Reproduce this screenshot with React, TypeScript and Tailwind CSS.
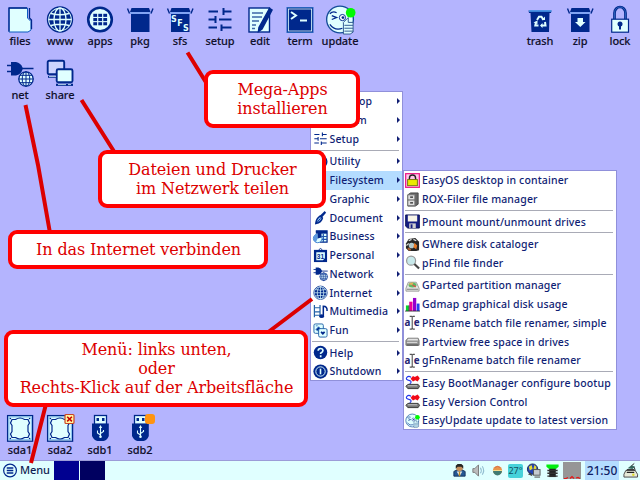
import React from "react";

const N = "#00288c";
const L = "#e0ffff";

type IconProps = { s?: number };

function Svg({ s = 28, box = 28, children }: { s?: number; box?: number; children: React.ReactNode }) {
  return (
    <svg width={s} height={s} viewBox={`0 0 ${box} ${box}`} fill="none" className="block shrink-0 overflow-visible">
      {children}
    </svg>
  );
}

const Files = ({ s }: IconProps) => (
  <Svg s={s}>
    <path d="M3 3H21.500V13L25 16.500V25L22 27H3Z" fill={L} stroke="#0d5ac0" strokeWidth="1" />
    <path d="M3 26.500V3H21M23.500 3V13L25.500 15V24" stroke={N} strokeWidth="1.300" />
  </Svg>
);

const Globe = ({ s }: IconProps) => (
  <Svg s={s}>
    <circle cx="14" cy="14.500" r="12.500" fill={L} stroke={N} strokeWidth="1.400" />
    <circle cx="14" cy="14.500" r="10.800" fill={N} />
    <g stroke={L} strokeWidth="1.300">
      <path d="M14 3V26M2.500 14.500H25.500M5 8.500Q14 11 23 8.500M5 20.500Q14 18 23 20.500" />
      <ellipse cx="14" cy="14.500" rx="6" ry="11.500" />
    </g>
  </Svg>
);

const Apps = ({ s }: IconProps) => (
  <Svg s={s}>
    <circle cx="14" cy="14.500" r="11.800" fill={L} stroke={N} strokeWidth="2.600" />
    {[0, 1, 2].map((r) => [0, 1, 2].map((c) => (
      <rect key={`${r}${c}`} x={7.3 + c * 5} y={8.8 + r * 4.2} width="3.800" height="3.100" fill={N} />
    )))}
  </Svg>
);

const Box = ({ s, children }: IconProps & { children?: React.ReactNode }) => (
  <Svg s={s}>
    <path d="M5 9H23.500V27H5Z" fill={N} />
    <path d="M5.500 3H23L24.500 7H4Z" fill={N} />
    <path d="M4 8H24.500" stroke="#4e93e8" strokeWidth="1" />
    <path d="M1.500 3.500L3.500 8.500M27 3.500L25 8.500" stroke={N} strokeWidth="1.400" />
    {children}
  </Svg>
);

const Sfs = () => (
  <Box>
    <g fill={L} fontFamily="DejaVu Sans" fontWeight="bold" fontSize="8">
      <text x="5" y="16.500">S</text>
      <text x="11.200" y="21">F</text>
      <text x="17" y="26">S</text>
    </g>
  </Box>
);

const Setup = ({ s }: IconProps) => (
  <Svg s={s}>
    <path d="M2.500 6.500H12M17.500 6.500H25.500M2.500 14.500H9.500M13 14.500H25.500M2.500 22.500H11M15.500 22.500H25.500M17.500 3V10M9.500 11V18M15.500 19.500V26" stroke={N} strokeWidth="2" />
  </Svg>
);

const Edit = () => (
  <Svg>
    <rect x="3" y="3" width="20.500" height="24" fill={L} stroke={N} strokeWidth="1.400" />
    <path d="M6 8H17M6 12H16M6 16H13M6 20H10M6 23.500H9" stroke="#3d68a8" strokeWidth="1.300" />
    <path d="M23.500 3.500L26 5L16 24L12.500 26.500L13 22.500Z" fill={N} stroke={N} strokeWidth="1.500" />
  </Svg>
);

const Term = () => (
  <Svg>
    <rect x="1" y="2.500" width="26" height="25" fill={N} stroke="#2463bc" strokeWidth="1" />
    <rect x="2.400" y="4" width="23.200" height="22" stroke={L} strokeWidth=".8" />
    <path d="M5 7L10 10.500L5 14M14 15.500H21" stroke={L} strokeWidth="2" />
  </Svg>
);

const Update = ({ s = 31 }: IconProps) => (
  <Svg s={s} box={32}>
    <circle cx="15.500" cy="16" r="13.800" fill={L} stroke="#154d99" strokeWidth="1.400" />
    <path d="M5 10Q8 7 12 9M7 12L12 14L7 16" stroke={N} strokeWidth="1.300" />
    <circle cx="18" cy="14" r="3.200" fill="white" stroke={N} />
    <circle cx="18.500" cy="14" r="1.400" fill={N} />
    <path d="M5 21Q10 28 18 25" stroke={N} strokeWidth="1.300" />
    <path d="M19 19L24 14V19H29V29L26 31H19Z" fill={L} stroke="#315a91" />
    <path d="M20 22H29M20 25H29M20 28H29" stroke="#315a91" />
    <circle cx="26.500" cy="9" r="5" fill="#00fb00" />
  </Svg>
);

const Trash = () => (
  <Svg>
    <path d="M2.500 5.500H25.500L25 8H23.500L23 27H5.500L4.500 8H3Z" fill={N} />
    <path d="M3 6H25.500" stroke="#4c9deb" strokeWidth="1.600" />
    <g stroke={L} strokeWidth="2">
      <path d="M11 15L13 11.800H15.500L17.500 15M19 17L19.500 20.500H15.500M12.500 20.500H9.300L10 17" />
    </g>
    <path d="M15.500 15H19V11.500ZM16.500 18V23L14 20.500ZM7.500 17.500L11.500 15.500V19Z" fill={L} />
  </Svg>
);

const Zip = () => (
  <Box><path d="M11.500 13H17V17H19.500L14.300 22L9 17H11.500Z" fill={L} /></Box>
);

const Lock = () => (
  <Svg>
    <path d="M8.500 15V8A5.500 6 0 0 1 19.500 8V15" stroke={N} strokeWidth="2.700" />
    <path d="M8.500 15V8A5.500 6 0 0 1 19.500 8V15" stroke="#3b75cc" strokeWidth=".7" />
    <rect x="5.700" y="14.200" width="16.800" height="13" fill={L} stroke={N} strokeWidth="1.200" />
    <circle cx="14" cy="19" r="2.500" fill={N} />
    <path d="M14 19V24.500" stroke={N} strokeWidth="2" />
  </Svg>
);

const Net = ({ s }: IconProps) => (
  <Svg s={s}>
    <path d="M1 6.500H6M1 12.500H6M14 9.500H27.500" stroke={N} strokeWidth="1.600" />
    <path d="M5 3H10Q15 4 16.500 8.500V10.500Q15 15.500 10 16.500H5Z" fill={N} />
    <circle cx="20" cy="20" r="7.200" fill={L} stroke={N} strokeWidth="1.300" />
    <path d="M20 12.500V27.500M12.500 20H27.500M14 16.300H26M14 23.700H26" stroke={N} />
    <ellipse cx="20" cy="20" rx="3.800" ry="7.200" stroke={N} />
  </Svg>
);

const Share = () => (
  <Svg>
    <rect x="1.700" y="1.700" width="16.500" height="13.500" rx="1.500" fill="#cdd5ff" stroke={N} strokeWidth="1.900" />
    <path d="M2 17.800H11" stroke={N} strokeWidth="2" />
    <rect x="10.700" y="10.200" width="15.800" height="13" rx="1.500" fill={L} stroke={N} strokeWidth="1.900" />
    <path d="M10 25.800H27" stroke={N} strokeWidth="2.200" />
    <path d="M3 17.600H10M12 25.600H20M22 25.600H25" stroke={L} strokeWidth=".8" />
  </Svg>
);

const Drive = ({ mounted }: { mounted?: boolean }) => (
  <Svg>
    <rect x="1.600" y="1.600" width="25" height="25.600" fill={L} stroke={N} strokeWidth="1.300" />
    <rect x="3" y="3" width="22.200" height="22.800" stroke="#4b98e4" strokeWidth=".6" />
    <path d="M6 5.500H9.500Q14 2.500 18.500 5.500H22L23.500 9L22 11.500V17.500L23.500 20L22 23.500H18.500Q14 26.500 9.500 23.500H6L4.500 20L6 17.500V11.500L4.500 9Z" stroke={N} strokeWidth="1.200" />
    <g fill={N}><circle cx="4.400" cy="4.500" r=".8" /><circle cx="23.600" cy="4.500" r=".8" /><circle cx="4.400" cy="24.500" r=".8" /><circle cx="23.600" cy="24.500" r=".8" /></g>
    {mounted && (
      <g>
        <rect x="19" y=".5" width="9" height="9" rx="1" fill="#fff5a0" stroke="#c94425" strokeWidth="1.200" />
        <path d="M21.200 2.700L25.900 7.400M25.900 2.700L21.200 7.400" stroke="#c80000" strokeWidth="1.500" />
      </g>
    )}
  </Svg>
);

const Usb = ({ mounted }: { mounted?: boolean }) => (
  <Svg>
    <rect x="8.500" y="1.500" width="12" height="9" fill={L} stroke={N} strokeWidth="1.300" />
    <rect x="10.500" y="4" width="2.500" height="3" fill={N} />
    <rect x="16" y="4" width="2.500" height="3" fill={N} />
    <path d="M6 9.500H22.800V22Q21 26.500 17.500 27H11.500Q8 26.500 6 22Z" fill={N} />
    <path d="M14.500 13V23M14.500 21L11.500 19V16.500M14.500 19.500L17.500 17.500V16" stroke={L} strokeWidth="1.100" />
    <path d="M14.500 11L16.200 14H12.800Z" fill={L} />
    <circle cx="14.500" cy="22.800" r="1.300" fill={L} />
    {mounted && <rect x="19" y="0" width="10" height="10" rx="3" fill="#ff9410" />}
  </Svg>
);

function Shortcut({ label, children }: { label: string; children: React.ReactNode }) {
  return (
    <div className="flex h-[54px] w-10 shrink-0 flex-col items-center">
      <div className="flex h-7 items-center justify-center">{children}</div>
      <span className="mt-[1px] text-[11px] leading-[14px] font-medium tracking-[-0.100px] whitespace-nowrap text-[#10102c] [-webkit-text-stroke:0.12px]">{label}</span>
    </div>
  );
}

/* Small menu and tray glyphs, drawn on a 16 unit square */
const S = ({ children }: { children: React.ReactNode }) => <Svg s={15} box={16}>{children}</Svg>;

const Pen = () => (
  <S><path d="M12.500 1L14 3L9.500 8L7 6.500Z" fill={N} /><path d="M7.500 6.500L10 8.500Q9 13 3 14.500Q3.500 9 7.500 6.500Z" fill="#8dc0f2" stroke={N} strokeWidth="1.600" /><path d="M4 13.500L8 9" stroke={N} /></S>
);
const Chart = () => (
  <S><path d="M3 2H15V14H7" fill={L} stroke={N} strokeWidth="1.300" /><path d="M3 2H15V5H3Z" fill={N} /><path d="M8 8H15M8 11H15M11 5V14" stroke="#1e55ac" strokeWidth="1.300" /><circle cx="5" cy="10" r="4.600" fill={L} stroke="#397dcc" /><path d="M5 10V5.500A4.500 4.500 0 0 0 3 14Z" fill="#5a97de" /><path d="M5 10V4H9V9Z" fill={N} /></S>
);
const Calendar = () => (
  <S><path d="M6 2L8 .500L10 2" stroke={N} /><rect x="1" y="2" width="14" height="13" fill={N} /><path d="M3.500 4.500H12.700V11L10.500 13H3.500Z" fill={L} /><text x="4" y="11.300" fontSize="7" fontWeight="bold" fontFamily="Liberation Sans" fill={N}>31</text></S>
);
const Media = () => (
  <S><path d="M1.500 1V14M7.500 1V14M1.500 4H7.500M1.500 8.500H7.500M1.500 12H7.500" stroke="#2463a8" strokeWidth="1.300" /><path d="M11 13V2.500Q15.500 2.500 15 7.500" stroke={N} strokeWidth="1.600" /><ellipse cx="9.300" cy="13" rx="2.500" ry="2" fill={N} /></S>
);
const Fun = () => (
  <S><rect x="1" y="1" width="10" height="10" rx="1.500" fill={L} stroke="#2463a8" /><path d="M3 3H5M6 4L9 7L6 9L3 7Z" fill={N} stroke="#4b88ca" /><rect x="6" y="6" width="9" height="9" rx="1.500" fill={L} stroke="#2463a8" /><path d="M8 10L10.500 12.700L13 10L11.800 8.800L10.500 9.800L9.200 8.800Z" fill={N} /></S>
);
const Help = () => (
  <S><circle cx="8" cy="8" r="7.200" fill={N} /><path d="M5.500 6.200Q5.500 3.700 8 3.700Q10.600 3.700 10.600 5.900Q10.600 7.300 8.200 8.700V9.700M8.200 11V13" stroke={L} strokeWidth="1.800" /></S>
);
const Shutdown = () => (
  <S><circle cx="8" cy="8" r="7.600" fill={N} /><circle cx="8" cy="8" r="5" stroke={L} strokeWidth="1" /><path d="M8 5V11" stroke={L} strokeWidth="1.700" /></S>
);
const Padlock = () => (
  <S><rect x=".700" y=".700" width="14.600" height="14.600" fill="#ffc8e9" stroke="#ed1787" strokeWidth="1.300" /><path d="M4.700 8V5.500A3.300 3.300 0 0 1 11.300 5.500V8" stroke="#222" strokeWidth="1.500" /><rect x="2.800" y="7" width="10.400" height="6.500" fill="#ece800" stroke="#77720a" /></S>
);
const Cabinet = () => (
  <S><path d="M3 3L6 1H14V13L11 15H3Z" fill="#666" stroke="#444" /><path d="M3 3H10.500V14.500H3Z" fill="#dedede" stroke="#777" /><path d="M3 8.500H10.500" stroke="#555" /><path d="M5.500 5.500H8.500M5.500 11.500H8.500" stroke="#222" strokeWidth="1.300" /></S>
);
const Floppy = () => (
  <S><path d="M.700 1H15.300V15H3L.700 13Z" fill="#161e83" stroke="#0a1155" /><rect x="3" y="1.500" width="10" height="6.500" fill="#f8f5e8" /><rect x="4.500" y="10" width="7" height="5" fill="#d0d0d0" /><rect x="6" y="11" width="2" height="4" fill="#161e83" /></S>
);
const Cataloger = () => (
  <S><path d="M1 7L4 2L11 1L15 5V14L12 15H4L1 12Z" fill="#262626" /><path d="M4 4L7 2.500M9 2.500L12 4M1.500 9L4 7" stroke="#ddd" strokeWidth="1.300" /><circle cx="7" cy="9" r="3" fill="#b2c9cb" /><path d="M10 6L13 9L12 13L9 11Z" fill="#e77a25" /><path d="M3 12L6 14" stroke="#b56033" strokeWidth="2" /></S>
);
const Finder = () => (
  <S><circle cx="6.500" cy="6" r="4.800" fill="#c8e9eb" stroke="#999" strokeWidth="1.300" /><path d="M10 9.500L15 14.500" stroke="#444" strokeWidth="2.300" /></S>
);
const Gparted = () => (
  <S><path d="M1 11L3.500 4.500H12L15 11V14H1Z" fill="#e3e7e3" stroke="#9a9a98" /><ellipse cx="8" cy="7.500" rx="4.300" ry="2.700" fill="#61b862" /><path d="M4 7Q5 4.500 9 5L8 7.500Z" fill="#e5b05b" /><path d="M8 7.500L11.500 9.500" stroke="#d9504b" strokeWidth="1.400" /><path d="M2 12H14" stroke="#777" /></S>
);
const Bars = () => (
  <S><rect x="1" y="9" width="3" height="6" fill="#05d62e" /><rect x="4.500" y="5" width="3.500" height="10" fill="#eb0097" /><rect x="8.500" y="1" width="3.500" height="14" fill="#9400cd" /><rect x="12.500" y="7" width="3" height="8" fill="#2442ef" /><path d="M0 15H16M4.200 9V15" stroke="#222" strokeWidth=".8" /></S>
);
const Rename = () => (
  <S><g fill="#252573" fontFamily="Noto Sans" fontWeight="bold" fontSize="10.500"><text x="-.5" y="11.500">a</text><text x="9.400" y="11.500">e</text></g><path d="M5 1.500H7L7.700 2.500L8.500 1.500H10.500M7.700 2V14M5 15H7L7.700 14L8.500 15H10.500" stroke="#555" strokeWidth="1.200" /></S>
);
const Partview = () => (
  <S><path d="M1 7L3 4.500H14L15 7V12H1Z" fill="#959595" stroke="#737373" /><path d="M2 7L3.500 5H13.500L14 7Z" fill="#e4e4e4" /><path d="M2 9H13" stroke="#ddd" /><path d="M2 11.800H14" stroke="#444" /></S>
);
const Boot = () => (
  <S><path d="M5 9.500Q8 7 5 6Q0 5 2 2.500Q4 .5 6.500 2.500" stroke="#2135ec" strokeWidth="1.200" /><path d="M1 12L3 10H14L15.500 12L14 14.500H3Z" fill="#777" stroke="#333" /><path d="M3 11.500H13" stroke="#ccc" /><path d="M6 4L8.500 1L10.500 2L13.500 .5L15.800 3.500L13.500 7L11 5.500L8.500 7Z" fill="#f10918" /></S>
);

type Item = [string, React.ReactNode] | null;

const mainItems: Item[] = [
  ["Desktop", <i className="size-[15px]" />], ["System", <i className="size-[15px]" />], ["Setup", <Setup s={15} />], null,
  ["Utility", <Apps s={15} />], ["Filesystem", <i className="size-[15px]" />], ["Graphic", <i className="size-[15px]" />], ["Document", <Pen />],
  ["Business", <Chart />], ["Personal", <Calendar />], ["Network", <Net s={15} />], ["Internet", <Globe s={15} />],
  ["Multimedia", <Media />], ["Fun", <Fun />], null, ["Help", <Help />], ["Shutdown", <Shutdown />],
];

const subItems: Item[] = [
  ["EasyOS desktop in container", <Padlock />], ["ROX-Filer file manager", <Cabinet />], null,
  ["Pmount mount/unmount drives", <Floppy />], null,
  ["GWhere disk cataloger", <Cataloger />], ["pFind file finder", <Finder />], null,
  ["GParted partition manager", <Gparted />], ["Gdmap graphical disk usage", <Bars />],
  ["PRename batch file renamer, simple", <Rename />], ["Partview free space in drives", <Partview />],
  ["gFnRename batch file renamer", <Rename />], null,
  ["Easy BootManager configure bootup", <Boot />], ["Easy Version Control", <Boot />],
  ["EasyUpdate update to latest version", <Update s={15} />],
];

function Menu({ items, arrows, className }: { items: Item[]; arrows?: boolean; className: string }) {
  return (
    <div className={`absolute border border-[#9090da] bg-white ${className}`}>
      {items.map((item, i) => item ? (
        <div key={i} className={`flex h-[18.750px] items-center ${arrows ? "pl-[2px]" : "pl-[1px]"} ${item[0] === "Filesystem" ? "bg-[#b4dcff]" : ""}`}>
          {item[1]}
          <span className={`text-[10.500px] leading-[18px] font-medium tracking-[0.140px] whitespace-nowrap text-[#101e74] ${arrows ? "ml-[1.500px]" : "ml-[2px]"}`}>{item[0]}</span>
          {arrows && <span className="mr-[2px] ml-auto h-0 w-0 border-y-[3px] border-l-[3px] border-y-transparent border-l-[#101e74]" />}
        </div>
      ) : (
        <div key={i} className="flex h-[3.750px] items-center pr-[3px] pl-[1px]"><div className="h-px w-full bg-[#a9abb6]" /></div>
      ))}
    </div>
  );
}

function Callout({ className, lines }: { className: string; lines: string[] }) {
  return (
    <div className={`absolute flex flex-col items-center justify-center rounded-[9px] border-4 border-[#ff0000] bg-white pl-px font-['DejaVu_Serif',serif] text-[16px] leading-[19px] tracking-[-0.130px] whitespace-nowrap text-[#dc0000] ${className}`}>
      {lines.map((l) => <span key={l}>{l}</span>)}
    </div>
  );
}

const User = () => (
  <S><path d="M2 14V9L6 7H10L14 9V14Z" fill="#255894" stroke="#18345c" /><path d="M5 9L8 14L11 9" fill="#eee" /><circle cx="8" cy="5" r="3.600" fill="#c58e5c" /><path d="M4 6V3L6 1H10L12 3V6L10 4H6Z" fill="#262626" /><path d="M8 9V14" stroke="#c08a20" strokeWidth="1.500" /></S>
);
const Speaker = () => (
  <S><path d="M2 6H4L8 2V14L4 10H2Z" fill="#bbb" stroke="#777" /><path d="M10 5Q12 8 10 11M12 3.500Q15 8 12 12.500" stroke="#94bfd2" strokeWidth="1.200" /></S>
);
const Ball = () => (
  <S><circle cx="8" cy="8" r="4.900" fill="#e9954b" /><path d="M3.300 8.500A4.700 4.700 0 0 0 12.700 8.500Z" fill="#3f7c73" /><path d="M3.300 8H12.700" stroke="#f7df91" /><path d="M5 5Q8 2 11 5" stroke="#d66b4b" /></S>
);
const NetTray = () => (
  <S><circle cx="7" cy="6.500" r="5.500" fill="#2543b5" stroke="#172452" /><path d="M3 4L6 2L7 6L4 8Z" fill="#e4d933" /><path d="M9 2L11 4V7L8 6Z" fill="#e4d933" /><rect x="8" y="7" width="7" height="6" fill="#c7cbd0" stroke="#555" /><path d="M2 12L5 10L7 14Z" fill="#444" /><path d="M9 15H15" stroke="#666" strokeWidth="1.300" /></S>
);
const Memory = () => (
  <S><path d="M4.500 4H11.500V15H4.500Z" fill="#202020" /><path d="M1.500 1.500H14.500V4L12 6H4L1.500 4Z" fill="#00ee10" /><path d="M2.500 8H13.500M2.500 11H13.500M2.500 14H13.500" stroke="#333" strokeWidth="1.500" /></S>
);
const Tray = () => (
  <S><path d="M1 12L3 8H13L15.500 12V15H1Z" fill="#e6ead8" stroke="#444" /><path d="M4 10H12" stroke="#222" strokeWidth="1.300" /><path d="M5 5.500L9 2.500L13 4L10 6.500Z" fill="#35685e" /><path d="M9 3L12 .5M12 4.500L13 8M4 7H12" stroke="#222" /><circle cx="11" cy="12.500" r="1.300" fill="#dddb32" /></S>
);

export default function App() {
  return (
    <div className="relative flex h-[480px] w-[640px] flex-col overflow-hidden bg-[#b4b4fe] font-['Noto_Sans',sans-serif]">
      <div className="flex justify-between pt-[5px]">
        <div className="flex w-[360px] flex-wrap">
          <Shortcut label="files"><Files /></Shortcut>
          <Shortcut label="www"><Globe /></Shortcut>
          <Shortcut label="apps"><Apps /></Shortcut>
          <Shortcut label="pkg"><Box /></Shortcut>
          <Shortcut label="sfs"><Sfs /></Shortcut>
          <Shortcut label="setup"><Setup /></Shortcut>
          <Shortcut label="edit"><Edit /></Shortcut>
          <Shortcut label="term"><Term /></Shortcut>
          <Shortcut label="update"><Update /></Shortcut>
          <Shortcut label="net"><Net /></Shortcut>
          <Shortcut label="share"><Share /></Shortcut>
        </div>
        <div className="flex">
          <Shortcut label="trash"><Trash /></Shortcut>
          <Shortcut label="zip"><Zip /></Shortcut>
          <Shortcut label="lock"><Lock /></Shortcut>
        </div>
      </div>
      <div className="mt-auto flex h-[46px]">
        <Shortcut label="sda1"><Drive /></Shortcut>
        <Shortcut label="sda2"><Drive mounted /></Shortcut>
        <Shortcut label="sdb1"><Usb /></Shortcut>
        <Shortcut label="sdb2"><Usb mounted /></Shortcut>
      </div>
      <div className="flex h-[20px] items-center border-t border-[#9c9cd8] bg-[#e0ffff]">
        <div className="flex w-[54px] items-center pl-[3px]">
          <S><circle cx="7.500" cy="8" r="6.800" stroke={N} strokeWidth="1.300" /><path d="M4 5.300H11M4 8H11M4 10.700H11" stroke={N} strokeWidth="1.600" /></S>
          <span className="ml-[2px] text-[11px] font-medium tracking-[-0.100px] text-[#101e54]">Menu</span>
        </div>
        <div className="h-full w-[25px] bg-[#000090]" />
        <div className="ml-px h-full w-[25px] bg-[#000060]" />
        <div className="ml-auto flex h-full items-center">
          <div className="mr-[3px] flex items-center gap-[4px]"><User /><Speaker /><Ball /></div>
          <div className="mr-[3px] h-[14px] w-[15px] rounded-[2px] bg-[#46d2da] text-center text-[9px] leading-[14px] text-[#125062]">27°</div>
          <div className="mr-[3px] flex items-center gap-[4px]"><NetTray /><Memory /></div>
          <div className="flex h-[17px] w-[18px] items-end bg-[#969696]">
            <svg className="block" width="18" height="4"><path d="M1 3.500H3L5 2.500M7 3.500L9 1.500L11 3.500M13 3L15 2.500L17 3.500" fill="none" stroke="#e71515" strokeWidth="1.200" /></svg>
          </div>
          <div className="ml-[4px] flex h-full w-[34px] items-center justify-center bg-[#b4dcff] text-[12px] font-medium text-[#101e64]">21:50</div>
          <div className="mr-[2px] ml-[4px]"><Tray /></div>
        </div>
      </div>
      <Menu items={mainItems} arrows className="top-[91px] left-[310px] h-[290px] w-[93px]" />
      <Menu items={subItems} className="top-[170px] left-[403px] h-[260px] w-[214px]" />
      <svg className="absolute inset-0" width="640" height="480" fill="none" stroke="#dc0000" strokeWidth="4">
        <path d="M187.500 52.500L207 84M81.500 100L115 153M25.500 105L38 165L50 233M267 333L312 299M46 404L31 463" />
      </svg>
      <Callout className="top-[70px] left-[204px] h-[58px] w-[156px]" lines={["Mega-Apps", "installieren"]} />
      <Callout className="top-[150px] left-[98px] h-[58px] w-[228px]" lines={["Dateien und Drucker", "im Netzwerk teilen"]} />
      <Callout className="top-[230px] left-[8px] h-[39px] w-[260px]" lines={["In das Internet verbinden"]} />
      <Callout className="top-[330px] left-[4px] h-[77px] w-[304px]" lines={["Menü: links unten,", "oder", "Rechts-Klick auf der Arbeitsfläche"]} />
    </div>
  );
}
